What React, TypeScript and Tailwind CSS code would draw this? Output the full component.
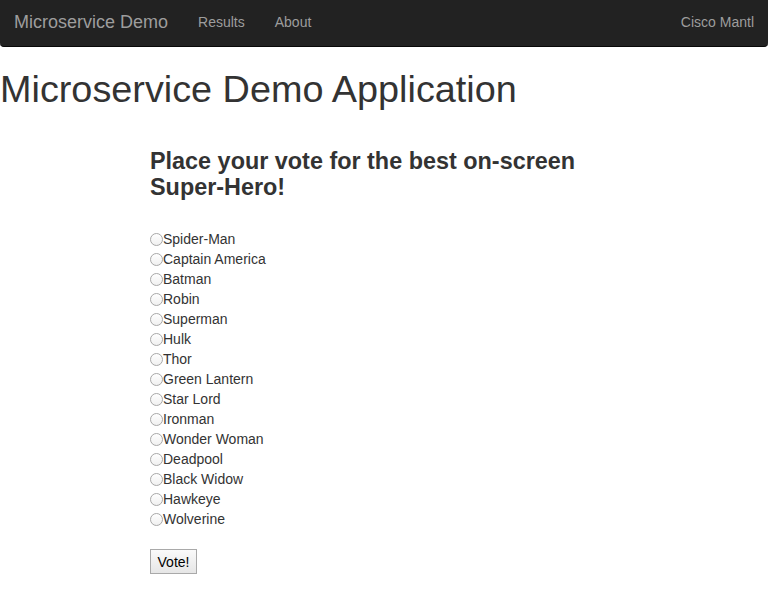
import React, { useState } from 'react';

const heroes = [
  'Spider-Man',
  'Captain America',
  'Batman',
  'Robin',
  'Superman',
  'Hulk',
  'Thor',
  'Green Lantern',
  'Star Lord',
  'Ironman',
  'Wonder Woman',
  'Deadpool',
  'Black Widow',
  'Hawkeye',
  'Wolverine',
];

export default function App() {
  const [vote, setVote] = useState('');

  return (
    <div className="min-h-screen bg-white text-[14px] leading-[20px] text-[#333]" style={{ fontFamily: '"Liberation Sans", Arial, sans-serif' }}>
      <nav className="flex h-[47px] items-center justify-between rounded-b-[4px] border-b border-[#080808] bg-[#222] pr-[14px] pb-[2px] mr-[2px]">
        <div className="flex items-center">
          <a href="#" className="pl-[14px] pr-[30px] text-[18px] text-[#9d9d9d]">Microservice Demo</a>
          <a href="#" className="pr-[30px] text-[#9d9d9d]">Results</a>
          <a href="#" className="text-[#9d9d9d]">About</a>
        </div>
        <a href="#" className="text-[#9d9d9d]">Cisco Mantl</a>
      </nav>

      <h1 className="mt-[22px] text-[37.8px] leading-[40px] font-normal">Microservice Demo Application</h1>

      <div className="ml-[150px] w-[450px]">
        <h3 className="mt-[39px] text-[23.4px] leading-[26px] font-bold">Place your vote for the best on-screen Super-Hero!</h3>

        <form className="mt-[29px]" onSubmit={(e) => e.preventDefault()}>
          <div className="flex flex-col">
            {heroes.map((h) => (
              <label key={h} className="flex h-[20px] items-center">
                <input
                  type="radio"
                  name="hero"
                  value={h}
                  checked={vote === h}
                  onChange={() => setVote(h)}
                  className="m-0 h-[13px] w-[13px] appearance-none rounded-full border border-[#a8a8a8] bg-gradient-to-b from-white to-[#f0f0f0] checked:border-[4px] checked:border-[#3b82f6]"
                />
                <span>{h}</span>
              </label>
            ))}
          </div>
          <button
            type="submit"
            className="mt-[20px] h-[25px] w-[47px] border border-[#a9a9a9] bg-gradient-to-b from-[#fafafa] to-[#e6e6e6] text-[14px] text-black"
          >
            Vote!
          </button>
        </form>
      </div>
    </div>
  );
}
